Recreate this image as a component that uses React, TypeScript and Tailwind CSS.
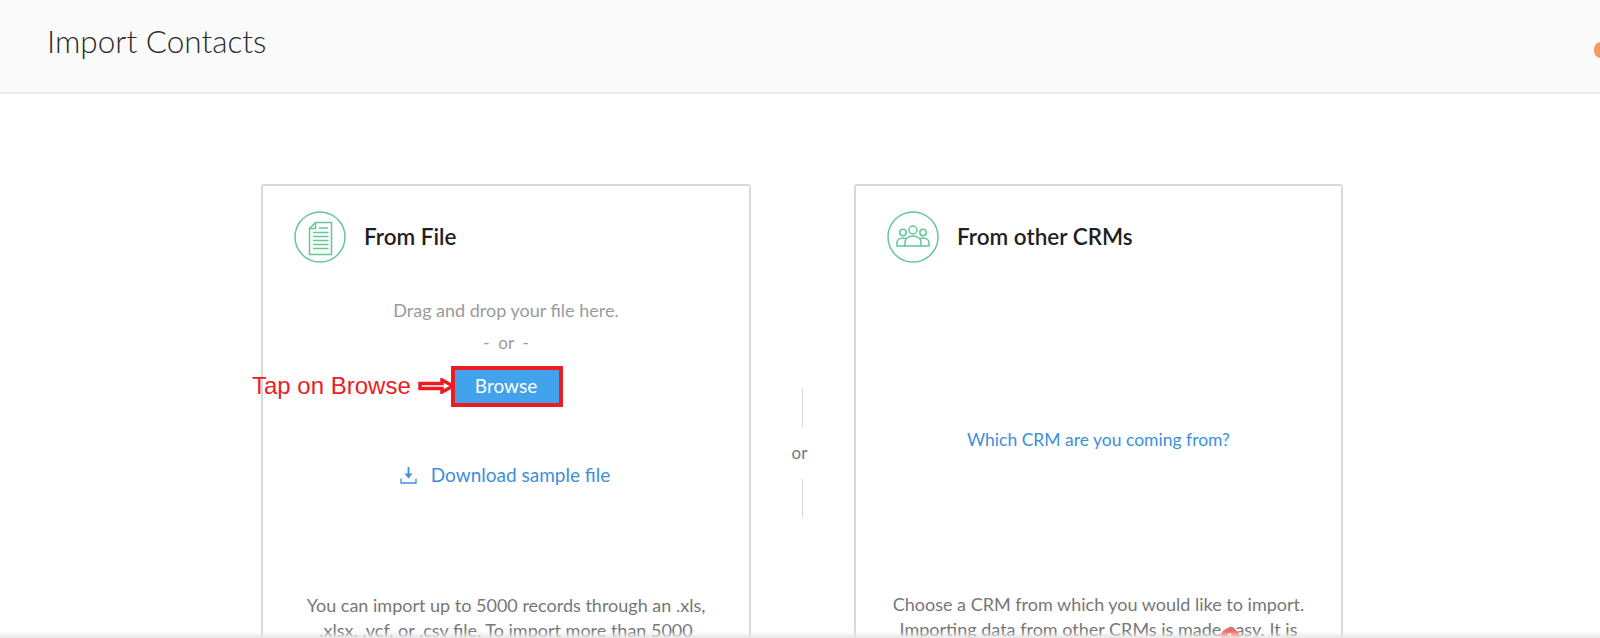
function FileIcon() {
  return (
    <svg width="52" height="52" viewBox="0 0 52 52" fill="none" stroke="#62c898" strokeWidth="1.5">
      <circle cx="26" cy="26" r="25" />
      <path d="M21.500 11.500h16v32h-22V17.500z" />
      <path d="M21.500 11.500v6h-6" />
      <path d="M25 17h9M19 21.500h15.500M19 25.500h15.500M19 29.500h15.500M19 33.500h15.500M19 37.500h15.500" />
    </svg>
  );
}

function PeopleIcon() {
  return (
    <svg width="52" height="52" viewBox="0 0 52 52" fill="none" stroke="#62c898" strokeWidth="1.5">
      <circle cx="26" cy="26" r="25" />
      <circle cx="26" cy="19" r="4" />
      <circle cx="16" cy="21.500" r="3.200" />
      <circle cx="36" cy="21.500" r="3.200" />
      <path d="M18 35v-3.500c0-4 3.500-6.500 8-6.500s8 2.500 8 6.500V35z" />
      <path d="M18 35h-8v-3c0-3 2.500-5 6-5 1 0 2 .2 3 .6" />
      <path d="M34 35h8v-3c0-3-2.500-5-6-5-1 0-2 .2-3 .6" />
    </svg>
  );
}

function Card({ icon, title, className, children }: { icon: React.ReactNode; title: string; className: string; children: React.ReactNode }) {
  return (
    <div className={`${className} h-[520px] shrink-0 border-2 border-[#d9d9d9] rounded-[3px] bg-white flex flex-col items-center px-[31px]`}>
      <div className="flex items-center gap-[18px] w-full mt-[25px]">
        {icon}
        <h2 className="text-[22.500px] leading-[30px] font-semibold text-[#1f1f1f]">{title}</h2>
      </div>
      {children}
    </div>
  );
}

export default function App() {
  return (
    <div className="relative h-[638px] overflow-hidden bg-white font-['Lato','Open_Sans',sans-serif]">
      <header className="h-[94px] bg-[#fafafa] border-b-2 border-[#ececec] pl-[47px] pt-[21px]">
        <h1 className="text-[31.500px] leading-[40px] font-light text-[#2b2b2b]">Import Contacts</h1>
      </header>

      <main className="flex pl-[261px] pt-[90px]">
        <Card className="w-[490px]" icon={<FileIcon />} title="From File">
          <p className="mt-[35px] text-[18px] leading-[24px] text-[#9b9b9b]">Drag and drop your file here.</p>
          <p className="mt-[9px] text-[17px] leading-[24px] text-[#9b9b9b]">-&nbsp; or &nbsp;-</p>
          <button className="mt-[11px] ml-[2px] w-[112px] h-[41px] pb-[2px] pr-[2px] bg-[#42a2ec] border-4 border-[#ed1c24] text-white text-[19px] leading-[24px]">
            Browse
          </button>
          <a className="mt-[56px] mr-[2px] flex items-center gap-[14px] text-[#3d8fdd] text-[19px] leading-[24px]">
            <svg width="17" height="17" viewBox="0 0 17 17" fill="none" stroke="#3d8fdd">
              <path strokeWidth="1.800" d="M8.500 0v9" />
              <path fill="#3d8fdd" stroke="none" d="M4.500 6.500h8l-4 5z" />
              <path strokeWidth="1.300" d="M1 11.500v4.500h15v-4.500" />
            </svg>
            Download sample file
          </a>
          <p className="mt-[106px] text-center text-[18px] leading-[25px] text-[#777777] w-[425px]">
            You can import up to 5000 records through an .xls, .xlsx, .vcf, or .csv file. To import more than 5000
          </p>
        </Card>

        <div className="w-[103px] shrink-0 flex flex-col items-center pt-[204px] pr-[6px] text-[#777777]">
          <div className="w-px h-[39px] bg-[#d9d9d9] ml-[6px]" />
          <span className="text-[17px] leading-[52px] h-[52px]">or</span>
          <div className="w-px h-[39px] bg-[#d9d9d9] ml-[6px]" />
        </div>

        <Card className="w-[489px]" icon={<PeopleIcon />} title="From other CRMs">
          <a className="mt-[165px] text-[17.500px] leading-[24px] text-[#3d8fdd]">Which CRM are you coming from?</a>
          <p className="mt-[140px] text-center text-[18px] leading-[25px] text-[#777777] w-[425px]">
            Choose a CRM from which you would like to import. Importing data from other CRMs is made easy. It is
          </p>
        </Card>
      </main>

      {/* annotation drawn over the screenshot */}
      <div className="absolute left-[252px] top-[371px] flex items-center gap-[7px] font-['Liberation_Sans',sans-serif] text-[#ed1c24] text-[24px] leading-[30px]">
        Tap on Browse
        <svg width="37" height="16" viewBox="0 0 37 16" fill="none" stroke="#ed1c24" strokeWidth="3.500">
          <path d="M2 5.500h22V2l11 6-11 6v-3.500H2z" />
        </svg>
      </div>

      <div className="absolute right-[-8px] top-[42px] w-[14px] h-[16px] rounded-full bg-[#f59a62]" />
      <div className="absolute left-[1220px] top-[628px] w-[20px] h-[20px] rounded-full bg-[#f5685f] text-white text-[11px] font-bold text-center leading-[18px]">
        1
      </div>
      <div className="absolute inset-x-0 bottom-0 h-[7px] bg-gradient-to-b from-transparent to-[#e8e8e8]" />
    </div>
  );
}
